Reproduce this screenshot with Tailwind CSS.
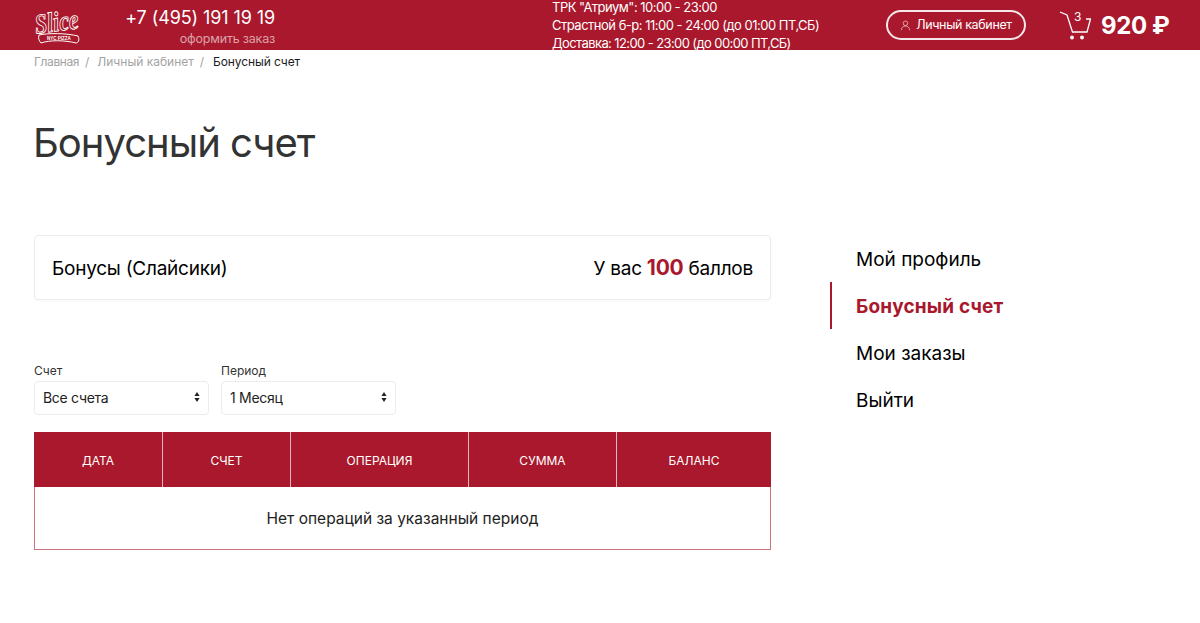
<!DOCTYPE html>
<html lang="ru">
<head>
  <meta charset="UTF-8" />
  <title>Бонусный счет</title>
  <script src="https://cdn.jsdelivr.net/npm/@tailwindcss/browser@4"></script>
</head>
<body class="bg-white font-['Inter','Noto_Sans',sans-serif] text-black overflow-hidden">

  <header class="h-[50px] bg-[#a9182c] text-white flex items-center">
    <!-- logo -->
    <div class="ml-[33px] w-[48px] h-[40px] shrink-0">
      <svg viewBox="0 0 48 40" class="w-[48px] h-[40px] overflow-visible" fill="none">
        <text x="2" y="26" transform="rotate(-7 24 20)" font-family="Liberation Serif, serif" font-style="italic" font-weight="700" font-size="28" fill="#a9182c" stroke="#fff" stroke-width="0.9" textLength="44" lengthAdjust="spacingAndGlyphs">Slice</text>
        <path d="M6 30 C15 28 33 28 45 31 C47 35 45 38 43 38 C32 35 16 35 8 38 C6 36 5 33 6 30Z" stroke="#fff" stroke-width="1"/>
        <text x="14" y="34.5" font-family="Liberation Sans, sans-serif" font-weight="700" font-size="4.5" fill="#fff">NYC PIZZA</text>
      </svg>
    </div>
    <div class="ml-[45px] w-[149px] shrink-0 text-right whitespace-nowrap">
      <div class="text-[18px] leading-[22px] mt-[3px] tracking-[-0.1px] flex justify-end">+7 (495) 191 19 19</div>
      <div class="text-[12.5px] leading-[16px] mt-[2px] tracking-[-0.2px] text-white/60">оформить заказ</div>
    </div>
    <div class="ml-[277px] w-[300px] shrink-0 text-[13px] leading-[18px] tracking-[-0.5px] whitespace-nowrap">
      <div>ТРК "Атриум": 10:00 - 23:00</div>
      <div>Страстной б-р: 11:00 - 24:00 (до 01:00 ПТ,СБ)</div>
      <div class="tracking-[-0.6px]">Доставка: 12:00 - 23:00 (до 00:00 ПТ,СБ)</div>
    </div>
    <a class="ml-[34px] w-[140px] h-[30px] shrink-0 rounded-full border-2 border-white/90 flex items-center justify-center gap-[5px] text-[12.5px] tracking-[-0.35px]">
      <svg viewBox="0 0 12 12" class="w-[11px] h-[11px] text-white/60" fill="none" stroke="currentColor" stroke-width="1">
        <circle cx="6" cy="3.6" r="2.5"/>
        <path d="M1.5 11.2c0-3 2-4.6 4.5-4.6s4.5 1.6 4.5 4.6"/>
      </svg>
      Личный кабинет
    </a>
    <div class="relative ml-[33px] w-[32px] h-[32px] shrink-0">
      <svg viewBox="0 0 32 32" class="w-[32px] h-[32px]" fill="none" stroke="#fff" stroke-width="1.3">
        <path d="M1 3 L8 6 L13.5 23 H28 L31.5 10 H27"/>
        <circle cx="13" cy="28.5" r="1.9" fill="#fff" stroke="none"/>
        <circle cx="23" cy="28.5" r="1.9" fill="#fff" stroke="none"/>
      </svg>
      <span class="absolute left-[15px] top-[1px] text-[12px] leading-[14px]">3</span>
    </div>
    <div class="ml-[10px] mt-[1px] text-[24px] font-bold tracking-[-0.4px] whitespace-nowrap">920 ₽</div>
  </header>

  <nav class="pl-[34px] h-[24px] flex items-center text-[12px] leading-[16px] tracking-[-0.1px] text-[#a3a3a3]">
    <span class="tracking-[-0.4px]">Главная</span>
    <span class="px-[6px]">/</span>
    <span class="ml-[2px] tracking-[0px]">Личный кабинет</span>
    <span class="px-[6px]">/</span>
    <span class="ml-[3px] text-[#1c1c1c]">Бонусный счет</span>
  </nav>

  <h1 class="pl-[34px] -ml-[1px] mt-[42px] text-[40px] leading-[54px] tracking-[-1px] text-[#333]">Бонусный счет</h1>

  <div class="flex pl-[34px] mt-[65px]">
    <main class="w-[737px] shrink-0">
      <div class="h-[65px] border border-[#ececec] rounded-[4px] pl-[17px] pr-[17px] pt-[3px] flex items-center justify-between text-[19px] tracking-[-0.25px] shadow-[0_1px_2px_rgba(0,0,0,0.03)]">
        <span>Бонусы (Слайсики)</span>
        <span>У вас <b class="font-bold text-[#a9182c] text-[21px] leading-none">100</b> баллов</span>
      </div>

      <div class="flex gap-[12px] mt-[62px]">
        <div class="w-[175px]">
          <div class="mt-[1px] text-[12px] leading-[16px] text-[#333] mb-[2px]">Счет</div>
          <div class="h-[34px] border border-[#ececec] rounded-[4px] pl-[8px] pr-[8px] pb-[2px] flex items-center justify-between text-[14px] tracking-[-0.3px] text-[#222]">
            Все счета
            <svg viewBox="0 0 6 10" class="w-[6px] h-[10px]" fill="#222"><path d="M3 0l2.6 4H.4zM3 10L.4 6h5.2z"/></svg>
          </div>
        </div>
        <div class="w-[175px]">
          <div class="mt-[1px] text-[12px] leading-[16px] text-[#333] mb-[2px]">Период</div>
          <div class="h-[34px] border border-[#ececec] rounded-[4px] pl-[8px] pr-[8px] pb-[2px] flex items-center justify-between text-[14px] tracking-[-0.3px] text-[#222]">
            1 Месяц
            <svg viewBox="0 0 6 10" class="w-[6px] h-[10px]" fill="#222"><path d="M3 0l2.6 4H.4zM3 10L.4 6h5.2z"/></svg>
          </div>
        </div>
      </div>

      <table class="mt-[17px] w-[737px] table-fixed border-separate border-spacing-0">
        <thead>
          <tr class="h-[55px] bg-[#a9182c] text-white text-[12px]">
            <th class="w-[129px] pt-[2px] font-normal border-r border-[#e3b6bd]">ДАТА</th>
            <th class="w-[128px] pt-[2px] font-normal border-r border-[#e3b6bd]">СЧЕТ</th>
            <th class="w-[178px] pt-[2px] font-normal border-r border-[#e3b6bd]">ОПЕРАЦИЯ</th>
            <th class="w-[148px] pt-[2px] font-normal border-r border-[#e3b6bd]">СУММА</th>
            <th class="pt-[2px] font-normal">БАЛАНС</th>
          </tr>
        </thead>
        <tbody>
          <tr class="h-[63px]">
            <td colspan="5" class="pt-[1px] text-center text-[15.5px] text-[#222] border-x border-b border-[#a9182c]/60">Нет операций за указанный период</td>
          </tr>
        </tbody>
      </table>
    </main>

    <aside class="ml-[59px] text-[19px] leading-[27px]">
      <a class="block pl-[26px] pt-[11px] pb-[9px]">Мой профиль</a>
      <a class="block pl-[24px] pt-[11px] pb-[9px] border-l-2 border-[#a9182c] text-[#a9182c] font-bold tracking-[0.15px]">Бонусный счет</a>
      <a class="block pl-[26px] pt-[11px] pb-[9px]">Мои заказы</a>
      <a class="block pl-[26px] pt-[11px] pb-[9px]">Выйти</a>
    </aside>
  </div>
</body>
</html>
